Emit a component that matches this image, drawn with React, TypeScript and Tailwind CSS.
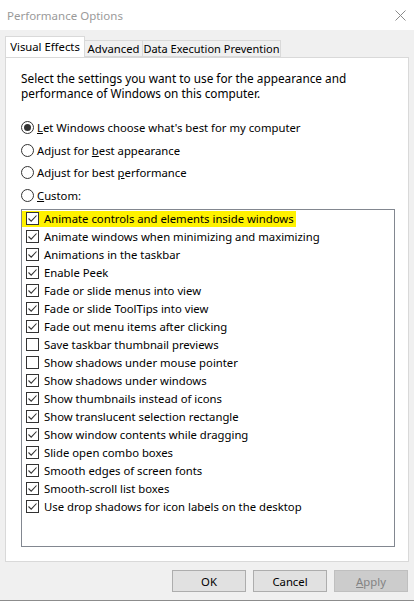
import { ReactNode } from 'react'

const effects: { label: string; checked: boolean }[] = [
  { label: 'Animate controls and elements inside windows', checked: true },
  { label: 'Animate windows when minimizing and maximizing', checked: true },
  { label: 'Animations in the taskbar', checked: true },
  { label: 'Enable Peek', checked: true },
  { label: 'Fade or slide menus into view', checked: true },
  { label: 'Fade or slide ToolTips into view', checked: true },
  { label: 'Fade out menu items after clicking', checked: true },
  { label: 'Save taskbar thumbnail previews', checked: false },
  { label: 'Show shadows under mouse pointer', checked: false },
  { label: 'Show shadows under windows', checked: true },
  { label: 'Show thumbnails instead of icons', checked: true },
  { label: 'Show translucent selection rectangle', checked: true },
  { label: 'Show window contents while dragging', checked: true },
  { label: 'Slide open combo boxes', checked: true },
  { label: 'Smooth edges of screen fonts', checked: true },
  { label: 'Smooth-scroll list boxes', checked: true },
  { label: 'Use drop shadows for icon labels on the desktop', checked: true },
]

const CheckBox = ({ checked }: { checked: boolean }) => (
  <span className="flex h-[13px] w-[13px] shrink-0 items-center justify-center border border-[#333333] bg-white">
    {checked ? (
      <svg width="11" height="11" viewBox="0 0 11 11">
        <path d="M1.5 5.5 L4.2 8.2 L9.5 2.5" fill="none" stroke="#333333" strokeWidth="1.1" />
      </svg>
    ) : null}
  </span>
)

const Radio = ({ selected, children }: { selected?: boolean; children: ReactNode }) => (
  <div className="flex h-[22.7px] items-center">
    <span className="flex h-[13px] w-[13px] items-center justify-center rounded-full border border-[#333333] bg-white">
      {selected ? <span className="h-[7px] w-[7px] rounded-full bg-[#333333]" /> : null}
    </span>
    <span className="ml-[3px] whitespace-nowrap">{children}</span>
  </div>
)

const Button = ({ children, disabled }: { children: ReactNode; disabled?: boolean }) => (
  <div
    className={
      disabled
        ? 'flex h-[22px] w-[74px] items-center justify-center border border-[#bfbfbf] bg-[#cccccc] text-[#838383]'
        : 'flex h-[22px] w-[74px] items-center justify-center border border-[#adadad] bg-[#e1e1e1] text-black'
    }
  >
    {children}
  </div>
)

export default function App() {
  return (
    <div
      className="flex h-[601px] w-[414px] flex-col overflow-hidden border-b border-[#8c8c8c] bg-[#f0f0f0] text-[11.3px] leading-[15px] text-black"
      style={{ fontFamily: '"Noto Sans", "Open Sans", sans-serif' }}
    >
      <div className="flex h-[30px] shrink-0 items-center justify-between bg-white pl-[7px] pr-[8px]">
        <span className="text-[11.5px] text-[#9a9a9a]">Performance Options</span>
        <svg width="11" height="11" viewBox="0 0 11 11">
          <path d="M0.5 0.5 L10.5 10.5 M10.5 0.5 L0.5 10.5" stroke="#8a8a8a" strokeWidth="1" />
        </svg>
      </div>

      <div className="px-[5px] pt-[7px]">
        <div className="flex h-[20px] items-end">
          <div className="relative z-10 flex h-[21px] w-[80px] items-center justify-center whitespace-nowrap border border-b-0 border-[#d9d9d9] bg-white pb-[2px]">
            Visual Effects
          </div>
          <div className="flex h-[17px] w-[58px] items-center justify-center whitespace-nowrap border border-l-0 border-[#d9d9d9]">
            Advanced
          </div>
          <div className="flex h-[17px] w-[138px] items-center justify-center whitespace-nowrap border border-l-0 border-[#d9d9d9] text-[11px]">
            Data Execution Prevention
          </div>
        </div>

        <div className="h-[505px] border border-[#d9d9d9] bg-white pl-[15px] pt-[13px]">
          <p className="text-[11.8px]">
            Select the settings you want to use for the appearance and
            <br />
            performance of Windows on this computer.
          </p>

          <div className="mt-[15px]">
            <Radio selected>
              <u>L</u>et Windows choose what's best for my computer
            </Radio>
            <Radio>
              Adjust for <u>b</u>est appearance
            </Radio>
            <Radio>
              Adjust for best <u>p</u>erformance
            </Radio>
            <Radio>
              <u>C</u>ustom:
            </Radio>
          </div>

          <div className="mt-[2px] h-[338px] w-[374px] border border-[#828790] bg-white">
            {effects.map((effect, index) =>
              index === 0 ? (
                <div key={effect.label} className="flex h-[18px] items-center">
                  <span className="flex h-[16px] items-center bg-[#fff200] pl-[4px] pr-[2px]">
                    <CheckBox checked={effect.checked} />
                    <span className="ml-[5px] whitespace-nowrap">{effect.label}</span>
                  </span>
                </div>
              ) : (
                <div key={effect.label} className="flex h-[18px] items-center pl-[4px]">
                  <CheckBox checked={effect.checked} />
                  <span className="ml-[5px] whitespace-nowrap">{effect.label}</span>
                </div>
              ),
            )}
          </div>
        </div>

        <div className="mt-[8px] flex justify-end gap-[7px] pr-px">
          <Button>OK</Button>
          <Button>Cancel</Button>
          <Button disabled>
            <u>A</u>pply
          </Button>
        </div>
      </div>
    </div>
  )
}
